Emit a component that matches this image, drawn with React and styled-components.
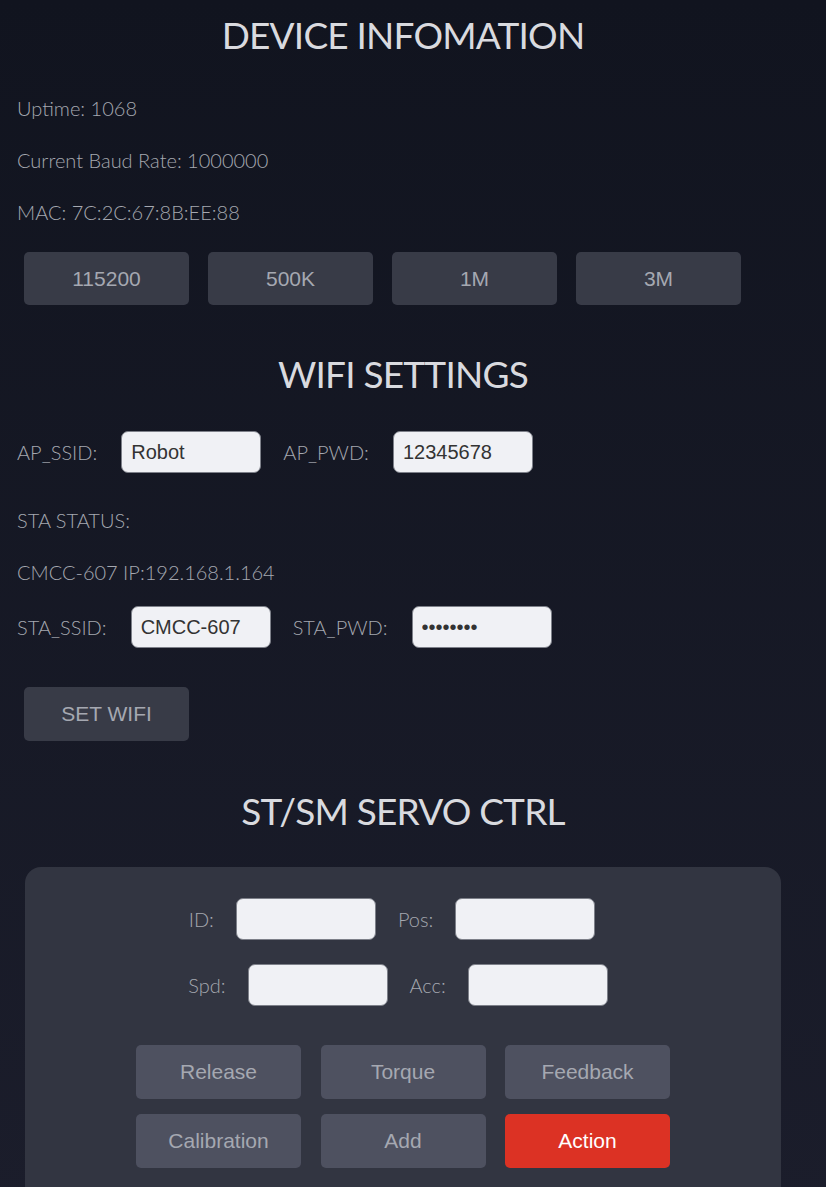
import React from "react";
import styled, { createGlobalStyle } from "styled-components";

const Global = createGlobalStyle`
  html, body { margin: 0; padding: 0; }
  body {
    background: linear-gradient(180deg, #11141f 0%, #1b1d2b 100%);
    min-height: 1187px;
    font-family: "Lato", "Noto Sans", sans-serif;
    overflow: hidden;
  }
`;

const Page = styled.main`
  width: 806px;
  box-sizing: border-box;
  padding: 0 17px;
  display: flex;
  flex-direction: column;
`;

const Title = styled.h2`
  margin: ${(p) => p.$top || 0}px 0 0;
  height: 70px;
  line-height: 70px;
  text-align: center;
  font-family: "Lato", "Noto Sans", sans-serif;
  font-weight: 400;
  font-size: 37px;
  letter-spacing: -0.8px;
  color: #d9dadf;
`;

const Info = styled.p`
  margin: ${(p) => p.$top || 0}px 0 0;
  height: 52px;
  line-height: 52px;
  font-weight: 300;
  font-size: 20px;
  color: #a5a8b0;
`;

const ButtonRow = styled.div`
  display: flex;
  gap: 19px;
  margin: ${(p) => p.$top || 0}px 0 0 7px;
`;

const Btn = styled.button`
  width: 165px;
  height: ${(p) => p.$h || 53}px;
  border: none;
  border-radius: 5px;
  background: ${(p) => (p.$red ? "#dc3224" : p.$light ? "#4e5160" : "#383b47")};
  color: ${(p) => (p.$red ? "#ffffff" : "#a5a8b1")};
  font-family: "Liberation Sans", Arial, sans-serif;
  font-size: 21px;
  padding: 0;
  cursor: pointer;
`;

const FieldRow = styled.div`
  display: flex;
  align-items: center;
  margin-top: ${(p) => p.$top || 0}px;
  justify-content: ${(p) => (p.$center ? "center" : "flex-start")};
  padding-left: ${(p) => p.$shift || 0}px;
`;

const Label = styled.label`
  font-weight: 300;
  font-size: 20px;
  color: #a5a8b0;
  margin-right: ${(p) => p.$gap || 24}px;
`;

const Input = styled.input`
  width: 140px;
  height: 42px;
  box-sizing: border-box;
  border: 1px solid #7d8089;
  border-radius: 7px;
  background: #f0f1f5;
  color: #333;
  font-family: "Liberation Sans", Arial, sans-serif;
  font-size: 20px;
  padding: 0 9px;
  margin-right: 22px;
  outline: none;
`;

const Panel = styled.section`
  margin: 21px 8px 0;
  background: #323541;
  border-radius: 16px;
  padding: 31px 0 40px;
  display: flex;
  flex-direction: column;
  align-items: center;
`;

const Grid = styled.div`
  margin-top: 39px;
  display: grid;
  grid-template-columns: repeat(3, 165px);
  column-gap: 19.5px;
  row-gap: 15px;
`;

export default function App() {
  return (
    <>
      <Global />
      <Page>
        <Title>DEVICE INFOMATION</Title>
        <Info $top={12}>Uptime: 1068</Info>
        <Info>Current Baud Rate: 1000000</Info>
        <Info>MAC: 7C:2C:67:8B:EE:88</Info>
        <ButtonRow $top={14}>
          <Btn>115200</Btn>
          <Btn>500K</Btn>
          <Btn>1M</Btn>
          <Btn>3M</Btn>
        </ButtonRow>

        <Title $top={34}>WIFI SETTINGS</Title>
        <FieldRow $top={22}>
          <Label>AP_SSID:</Label>
          <Input defaultValue="Robot" />
          <Label>AP_PWD:</Label>
          <Input defaultValue="12345678" />
        </FieldRow>
        <Info $top={21}>STA STATUS:</Info>
        <Info>CMCC-607 IP:192.168.1.164</Info>
        <FieldRow $top={8}>
          <Label>STA_SSID:</Label>
          <Input defaultValue="CMCC-607" />
          <Label>STA_PWD:</Label>
          <Input type="password" defaultValue="12345678" />
        </FieldRow>
        <ButtonRow $top={39}>
          <Btn $h={54}>SET WIFI</Btn>
        </ButtonRow>

        <Title $top={35}>ST/SM SERVO CTRL</Title>
        <Panel>
          <FieldRow $center>
            <Label $gap={22}>ID:</Label>
            <Input />
            <Label $gap={22}>Pos:</Label>
            <Input />
          </FieldRow>
          <FieldRow $center $top={24} $shift={12}>
            <Label $gap={22}>Spd:</Label>
            <Input />
            <Label $gap={22}>Acc:</Label>
            <Input />
          </FieldRow>
          <Grid>
            <Btn $light $h={54}>Release</Btn>
            <Btn $light $h={54}>Torque</Btn>
            <Btn $light $h={54}>Feedback</Btn>
            <Btn $light $h={54}>Calibration</Btn>
            <Btn $light $h={54}>Add</Btn>
            <Btn $red $h={54}>Action</Btn>
          </Grid>
        </Panel>
      </Page>
    </>
  );
}
